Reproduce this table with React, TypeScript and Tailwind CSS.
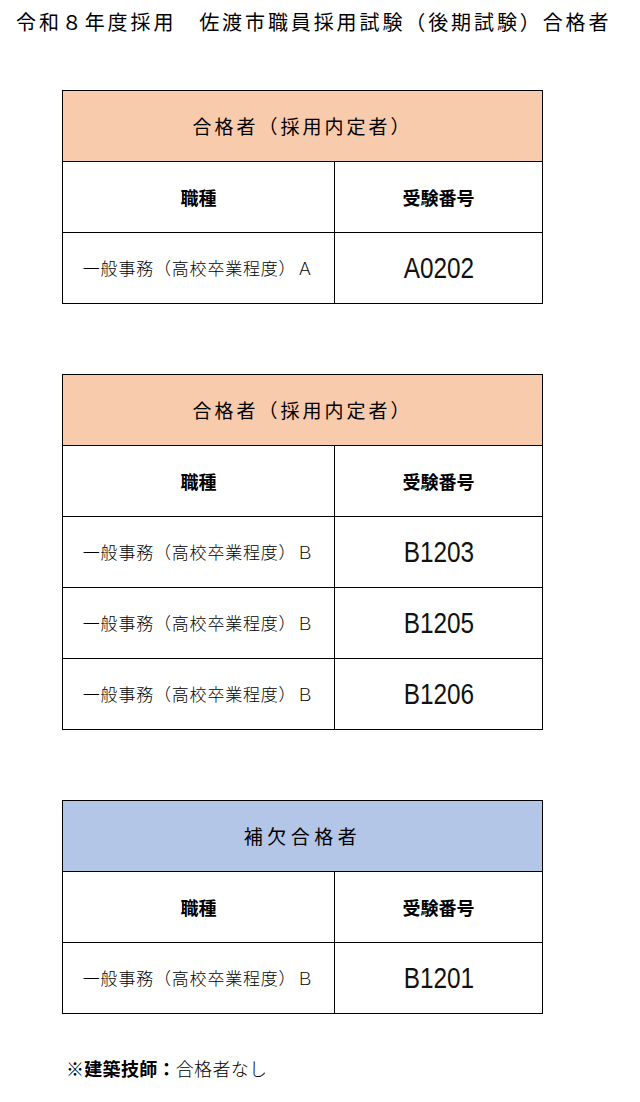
import React from 'react';

type Table = { title: string; tone: 'peach' | 'blue'; rows: { job: string; no: string }[] };

const tables: Table[] = [
  { title: '合格者（採用内定者）', tone: 'peach', rows: [{ job: '一般事務（高校卒業程度）Ａ', no: 'A0202' }] },
  {
    title: '合格者（採用内定者）',
    tone: 'peach',
    rows: [
      { job: '一般事務（高校卒業程度）Ｂ', no: 'B1203' },
      { job: '一般事務（高校卒業程度）Ｂ', no: 'B1205' },
      { job: '一般事務（高校卒業程度）Ｂ', no: 'B1206' },
    ],
  },
  { title: '補欠合格者', tone: 'blue', rows: [{ job: '一般事務（高校卒業程度）Ｂ', no: 'B1201' }] },
];

const jp = "font-['Noto_Sans_CJK_JP','Noto_Sans',sans-serif]";

const ResultTable: React.FC<{ t: Table }> = ({ t }) => (
  <div className="w-[481px] border-l border-t border-black">
    <div
      className={`h-[71px] border-r border-b border-black flex items-center justify-center text-[19px] ${
        t.tone === 'peach' ? 'bg-[#f8cbad] tracking-[3px]' : 'bg-[#b4c6e7] tracking-[4.5px]'
      }`}
    >
      {t.title}
    </div>
    <div className="grid grid-cols-[272px_208px]">
      <div className="h-[71px] border-r border-b border-black flex items-center justify-center text-[18px] font-bold">職種</div>
      <div className="h-[71px] border-r border-b border-black flex items-center justify-center text-[18px] font-bold">受験番号</div>
      {t.rows.map((r, i) => (
        <React.Fragment key={i}>
          <div className="h-[71px] border-r border-b border-black flex items-center justify-center text-[17px] font-light tracking-[0.8px]">
            {r.job}
          </div>
          <div className="h-[71px] border-r border-b border-black flex items-center justify-center">
            <span className="inline-block scale-x-[0.84] font-['Liberation_Sans',sans-serif] text-[29px] leading-none text-[#111]">
              {r.no}
            </span>
          </div>
        </React.Fragment>
      ))}
    </div>
  </div>
);

export default function App() {
  return (
    <div className={`w-[640px] min-h-[1102px] bg-white text-black ${jp}`}>
      <h1 className="pt-[10px] pl-[16px] text-[20px] leading-[24px] tracking-[2.9px] whitespace-nowrap">
        令和８年度採用　佐渡市職員採用試験（後期試験）合格者
      </h1>
      <div className="pl-[62px] pt-[56px] flex flex-col gap-[70px]">
        {tables.map((t, i) => (
          <ResultTable key={i} t={t} />
        ))}
      </div>
      <p className="pl-[66px] pt-[43px] text-[18px] leading-[22px] tracking-[0.3px]">
        <span className="font-bold">※建築技師：</span>
        <span className="font-light">合格者なし</span>
      </p>
    </div>
  );
}
